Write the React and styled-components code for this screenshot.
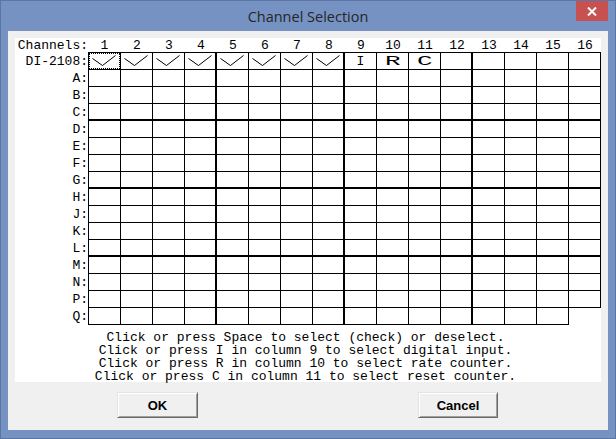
import React from "react";
import styled, { createGlobalStyle } from "styled-components";

const GlobalStyle = createGlobalStyle`
  html, body {
    margin: 0;
    padding: 0;
    background: #ffffff;
  }
  body {
    overflow: hidden;
  }
`;

const ROWS = ["DI-2108", "A", "B", "C", "D", "E", "F", "G", "H", "J", "K", "L", "M", "N", "P", "Q"];
const COLS = Array.from({ length: 16 }, (_, i) => i + 1);
const MODES = { 9: "I", 10: "R", 11: "C" };

const HINTS = [
  "Click or press Space to select (check) or deselect.",
  "Click or press I in column 9 to select digital input.",
  "Click or press R in column 10 to select rate counter.",
  "Click or press C in column 11 to select reset counter.",
];

const Window = styled.div`
  width: 616px;
  height: 439px;
  box-sizing: border-box;
  display: flex;
  flex-direction: column;
  padding: 0 7px 8px;
  background: #7592c3;
  border: 1px solid #5a76a5;
`;

const TitleBar = styled.div`
  height: 30px;
  flex: none;
  display: grid;
  grid-template-columns: 1fr auto 1fr;
  align-items: center;
`;

const Title = styled.div`
  grid-column: 2;
  font-family: "Open Sans", "Noto Sans", sans-serif;
  font-size: 14.5px;
  color: #262626;
  padding-top: 1px;
`;

const Close = styled.div`
  grid-column: 3;
  justify-self: end;
  align-self: start;
  width: 32px;
  height: 20px;
  display: flex;
  align-items: center;
  justify-content: center;
  background: #c75050;
`;

const Client = styled.div`
  flex: 1;
  display: flex;
  flex-direction: column;
  padding: 7px 7px 0;
  background: #f0f0f0;
`;

const Panel = styled.div`
  height: 344px;
  flex: none;
  background: #ffffff;
  font-family: "Liberation Mono", "DejaVu Sans Mono", monospace;
  font-size: 13px;
  color: #000000;
`;

const Table = styled.div`
  display: grid;
  grid-template-columns: 73px 33px repeat(15, 32px);
  grid-template-rows: 14px 18px repeat(15, 17px);
`;

const Label = styled.div`
  display: flex;
  align-items: center;
  justify-content: flex-end;
  line-height: 13px;
  white-space: pre;
`;

const ColNum = styled.div`
  display: flex;
  align-items: center;
  justify-content: center;
  line-height: 13px;
`;

const Cell = styled.div`
  box-sizing: border-box;
  position: relative;
  display: flex;
  align-items: center;
  justify-content: center;
  overflow: hidden;
  border-right: ${(p) => (p.$col % 4 === 0 && p.$col !== 16 ? 2 : 1)}px solid #000;
  border-bottom: ${(p) => ([3, 7, 11].includes(p.$row) ? 2 : 1)}px solid #000;
  border-left: ${(p) => (p.$col === 1 ? "1px solid #000" : "none")};
  border-top: ${(p) => (p.$row === 0 ? "1px solid #000" : "none")};
`;

const Focus = styled.div`
  position: absolute;
  inset: 0;
  outline: 1px dotted #000;
  outline-offset: -1px;
`;

const Check = styled.svg`
  position: absolute;
  left: 0;
  top: 0;
`;

const Mode = styled.span`
  display: inline-block;
  line-height: 13px;
  transform: scaleX(${(p) => p.$stretch});
`;

const Hints = styled.div`
  margin-top: 6px;
  padding-right: 5px;
  text-align: center;
  line-height: 13px;
  white-space: pre;
`;

const Footer = styled.div`
  flex: 1;
  display: flex;
  justify-content: space-between;
  align-items: flex-start;
  padding: 10px 103px 0 102px;
`;

const Button = styled.button`
  width: ${(p) => p.$w}px;
  height: 26px;
  padding: 0;
  box-sizing: border-box;
  background: #f0f0f0;
  border: 1px solid;
  border-color: #e3e3e3 #696969 #696969 #e3e3e3;
  box-shadow: inset 1px 1px #ffffff, inset -1px -1px #a0a0a0;
  font-family: "Liberation Sans", Arial, sans-serif;
  font-weight: bold;
  font-size: 13px;
  color: #000;
`;

function CheckMark() {
  return (
    <Check width="30" height="16" viewBox="0 0 30 16">
      <polyline
        points="3.5,5.5 13.5,12.5 26.5,2.5"
        fill="none"
        stroke="#000"
        strokeWidth="1"
      />
    </Check>
  );
}

function GridCell({ row, col }) {
  if (row === 15 && col === 16) return <div />;
  const isDevice = row === 0;
  return (
    <Cell $row={row} $col={col}>
      {isDevice && col <= 8 && <CheckMark />}
      {isDevice && col === 1 && <Focus />}
      {isDevice && MODES[col] && (
        <Mode $stretch={col === 9 ? 1 : 2}>{MODES[col]}</Mode>
      )}
    </Cell>
  );
}

export default function App() {
  return (
    <>
      <GlobalStyle />
      <Window>
        <TitleBar>
          <Title>Channel Selection</Title>
          <Close>
            <svg width="10" height="9" viewBox="0 0 10 9">
              <path d="M1 0.5 L9 8.5 M9 0.5 L1 8.5" stroke="#fff" strokeWidth="2" />
            </svg>
          </Close>
        </TitleBar>
        <Client>
          <Panel>
            <Table>
              <Label>Channels:</Label>
              {COLS.map((c) => (
                <ColNum key={c}>{c}</ColNum>
              ))}
              {ROWS.map((r, ri) => (
                <React.Fragment key={r}>
                  <Label>{r}:</Label>
                  {COLS.map((c) => (
                    <GridCell key={c} row={ri} col={c} />
                  ))}
                </React.Fragment>
              ))}
            </Table>
            <Hints>{HINTS.join("\n")}</Hints>
          </Panel>
          <Footer>
            <Button $w={81}>OK</Button>
            <Button $w={80}>Cancel</Button>
          </Footer>
        </Client>
      </Window>
    </>
  );
}
